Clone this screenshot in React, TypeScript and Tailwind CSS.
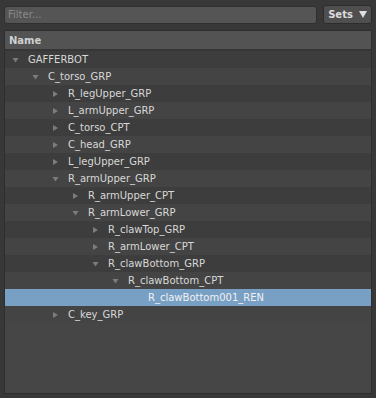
const rows: { name: string; depth: number; open?: boolean; leaf?: boolean; selected?: boolean }[] = [
  { name: "GAFFERBOT", depth: 0, open: true },
  { name: "C_torso_GRP", depth: 1, open: true },
  { name: "R_legUpper_GRP", depth: 2 },
  { name: "L_armUpper_GRP", depth: 2 },
  { name: "C_torso_CPT", depth: 2 },
  { name: "C_head_GRP", depth: 2 },
  { name: "L_legUpper_GRP", depth: 2 },
  { name: "R_armUpper_GRP", depth: 2, open: true },
  { name: "R_armUpper_CPT", depth: 3 },
  { name: "R_armLower_GRP", depth: 3, open: true },
  { name: "R_clawTop_GRP", depth: 4 },
  { name: "R_armLower_CPT", depth: 4 },
  { name: "R_clawBottom_GRP", depth: 4, open: true },
  { name: "R_clawBottom_CPT", depth: 5, open: true },
  { name: "R_clawBottom001_REN", depth: 6, leaf: true, selected: true },
  { name: "C_key_GRP", depth: 2 },
];

// indent per depth level, 20px steps
const pad = ["pl-[7px]", "pl-[27px]", "pl-[47px]", "pl-[67px]", "pl-[87px]", "pl-[107px]", "pl-[127px]"];

function Arrow({ open }: { open?: boolean }) {
  return open ? (
    <svg width="8" height="8" viewBox="0 0 8 8" className="shrink-0">
      <path d="M0.5 2 L6.5 2 L3.5 6.5 Z" fill="#7c7c7c" />
    </svg>
  ) : (
    <svg width="8" height="8" viewBox="0 0 8 8" className="shrink-0">
      <path d="M1 1 L6 4 L1 7 Z" fill="#7c7c7c" />
    </svg>
  );
}

export default function App() {
  return (
    <div className="flex h-[398px] w-[376px] flex-col bg-[#383838] font-['DejaVu_Sans',sans-serif] text-[10px] text-[#d8d8d8]">
      <div className="flex items-center gap-[6px] px-[4px] pt-[5px] pb-[6px]">
        <div className="flex h-[18px] flex-1 items-center rounded-[3px] border border-[#2f2f2f] bg-[#555555] px-[3px] text-[#8a8a8a]">
          Filter...
        </div>
        <div className="flex h-[19px] w-[49px] items-center justify-center gap-[6px] rounded-[3px] border border-[#2c2c2c] bg-[#4f4f4f] font-bold text-[#dcdcdc]">
          <span>Sets</span>
          <svg width="8" height="7" viewBox="0 0 8 7">
            <path d="M0 0 L8 0 L4 7 Z" fill="#e0e0e0" />
          </svg>
        </div>
      </div>
      <div className="mx-[4px] mb-[4px] flex flex-1 flex-col border border-[#2e2e2e] bg-[#464646]">
        <div className="flex h-[20px] items-center border-b-2 border-[#363636] bg-[#535353] pl-[4px] font-bold text-[#d0d0d0]">
          Name
        </div>
        {rows.map((r, i) => (
          <div
            key={r.name}
            className={
              "flex h-[17px] items-center gap-[8px] " +
              pad[r.depth] +
              " " +
              (r.selected ? "bg-[#789fc4] text-[#f2f2f2]" : i % 2 === 0 ? "bg-[#3d3d3d]" : "bg-[#444444]")
            }
          >
            {r.leaf ? <span className="w-[8px] shrink-0" /> : <Arrow open={r.open} />}
            <span className="leading-none">{r.name}</span>
          </div>
        ))}
      </div>
    </div>
  );
}
